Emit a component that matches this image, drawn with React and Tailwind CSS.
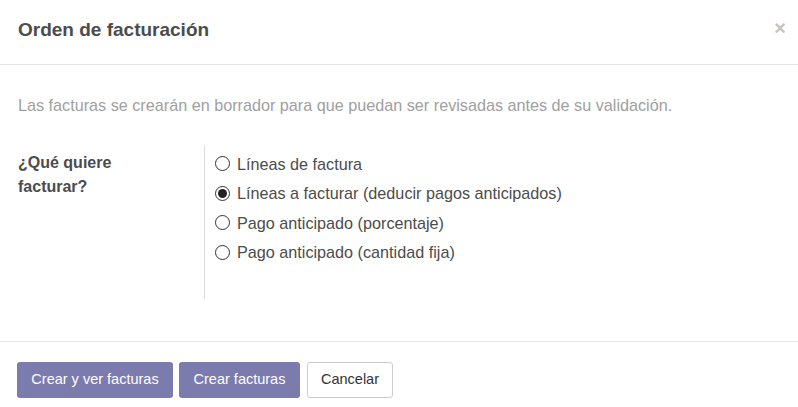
import React from "react";

function Radio({ checked, label }) {
  return (
    <div className="flex items-center h-[29.6px]">
      <span className="w-[15px] h-[15px] rounded-full border border-[#333] flex items-center justify-center bg-white ml-[10px]">
        {checked && <span className="w-[9px] h-[9px] rounded-full bg-[#222]" />}
      </span>
      <span className="ml-[7px] text-[16.2px] text-[#4c4c4c]">{label}</span>
    </div>
  );
}

export default function App() {
  return (
    <div
      className="w-[798px] h-[407px] bg-white flex flex-col overflow-hidden"
      style={{ fontFamily: '"Liberation Sans", Arial, sans-serif' }}
    >
      <div className="h-[65px] shrink-0 border-b border-[#e5e5e5] flex items-center justify-between pl-[18px] pr-[12px]">
        <h4 className="text-[19px] font-bold text-[#4c4c4c] mt-[-4px]">Orden de facturación</h4>
        <span className="text-[20px] font-bold text-[#c4c4c4] leading-none mt-[-8px]">×</span>
      </div>
      <div className="flex-1 px-[18px] pt-[30px]">
        <p className="text-[16.2px] text-[#a0a0a0] leading-[20px]">
          Las facturas se crearán en borrador para que puedan ser revisadas antes de su validación.
        </p>
        <div className="flex mt-[30px]">
          <div className="w-[186px] pt-[6px] text-[16px] font-bold text-[#4c4c4c] leading-[24px] pr-[50px]">
            ¿Qué quiere facturar?
          </div>
          <div className="border-l border-[#dcdcdc] h-[154px] pt-[4px]">
            <Radio label="Líneas de factura" />
            <Radio checked label="Líneas a facturar (deducir pagos anticipados)" />
            <Radio label="Pago anticipado (porcentaje)" />
            <Radio label="Pago anticipado (cantidad fija)" />
          </div>
        </div>
      </div>
      <div className="h-[66px] shrink-0 border-t border-[#e5e5e5] flex items-start gap-[6px] pl-[17px] pt-[20px]">
        <button className="h-[36px] w-[156px] rounded-[3px] bg-[#7c7bad] text-white text-[14.5px]">Crear y ver facturas</button>
        <button className="h-[36px] w-[121px] rounded-[3px] bg-[#7c7bad] text-white text-[14.5px]">Crear facturas</button>
        <button className="h-[36px] w-[86px] rounded-[3px] bg-white border border-[#ccc] text-[#333] text-[14.5px] ml-[1px]">Cancelar</button>
      </div>
    </div>
  );
}
